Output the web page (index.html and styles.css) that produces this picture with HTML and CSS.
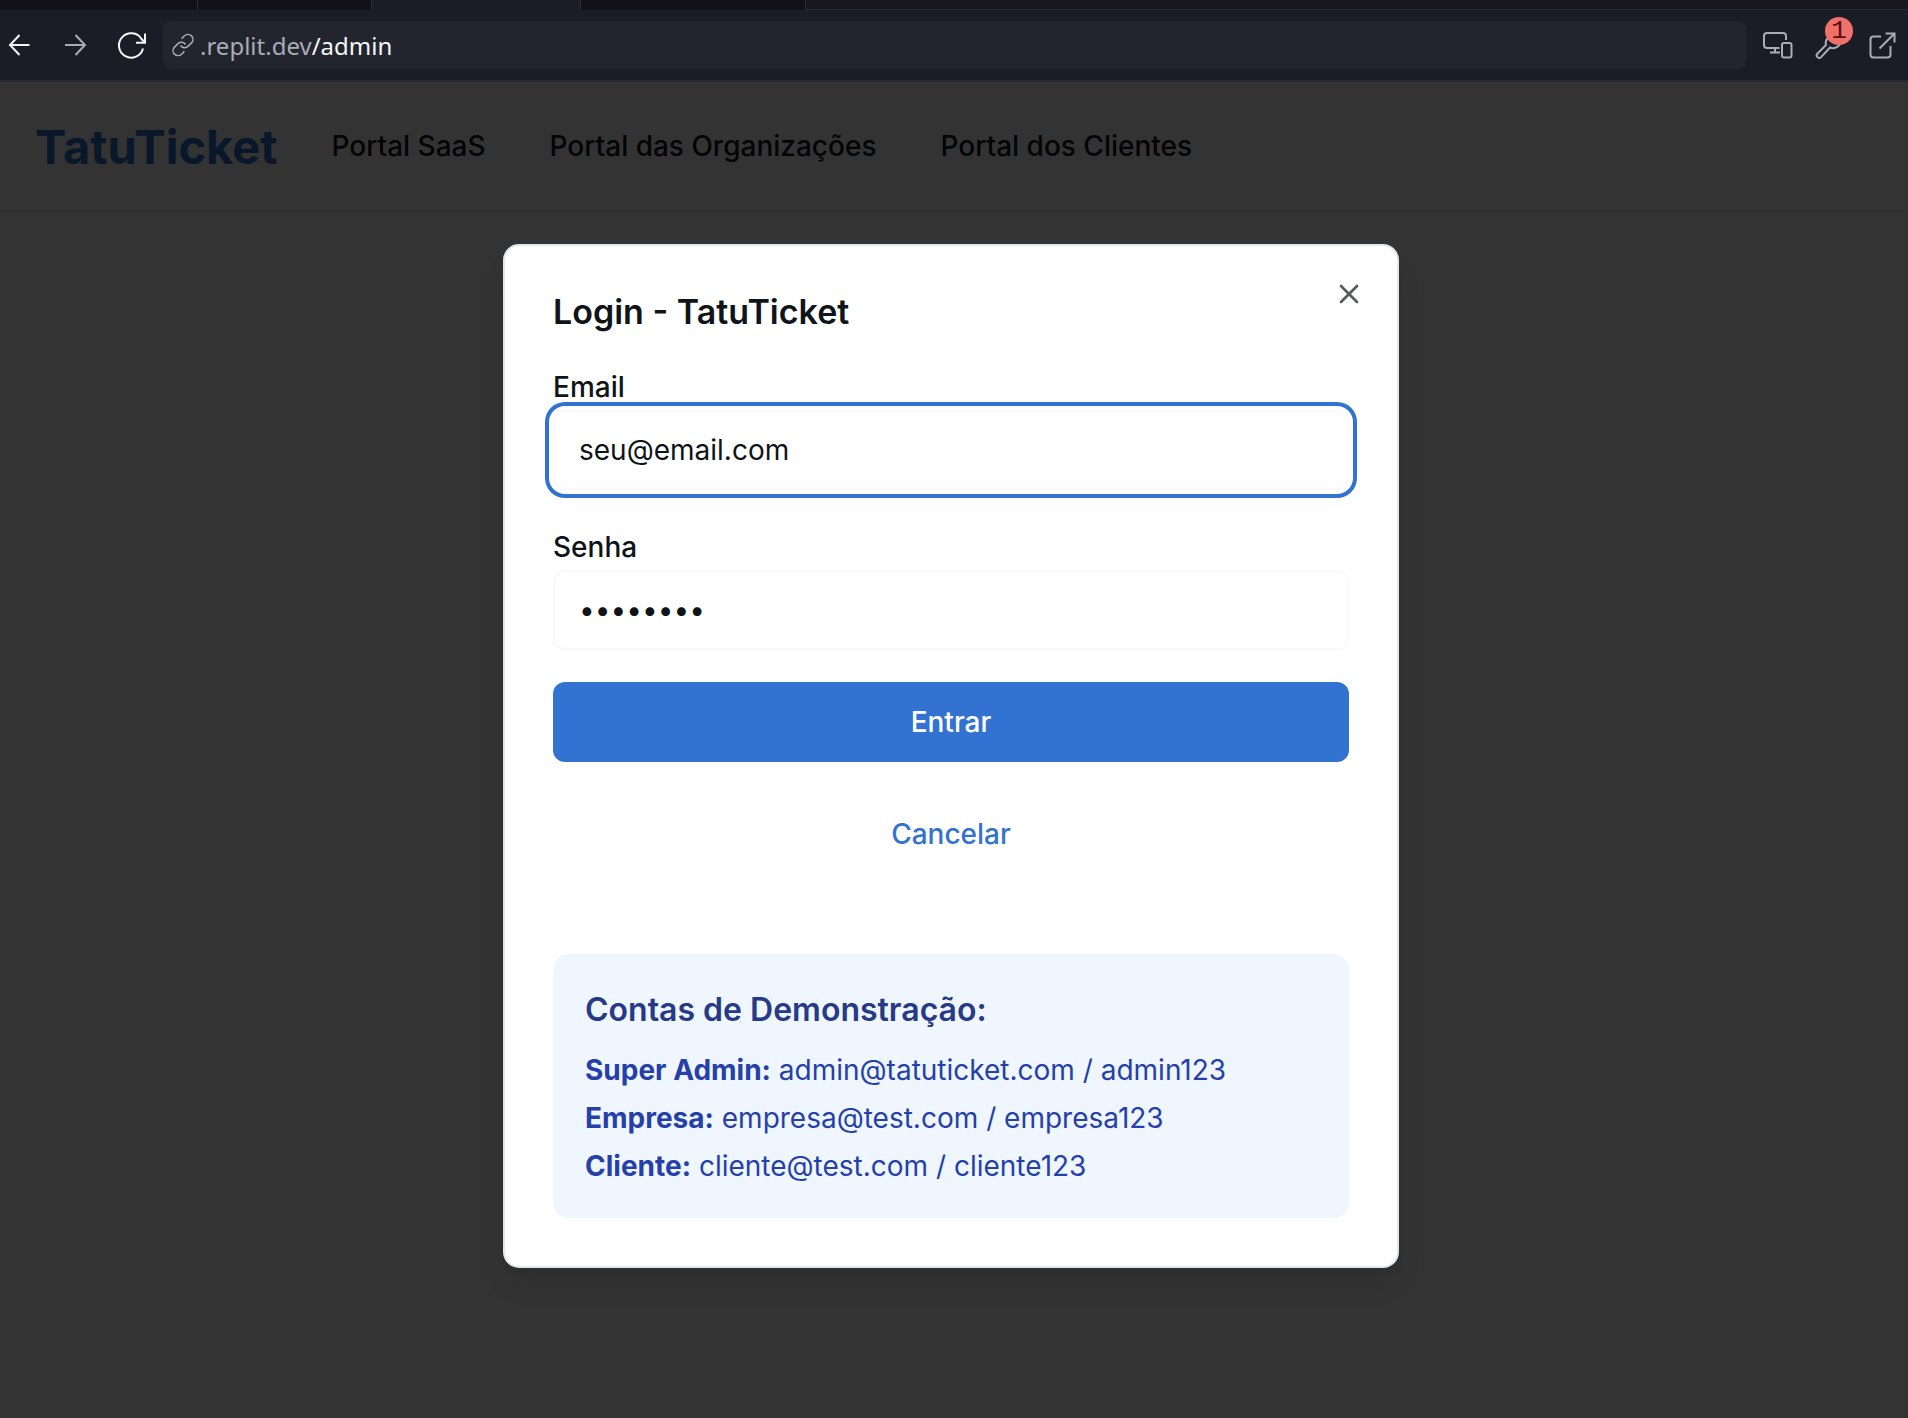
FILE: index.html
```html
<!DOCTYPE html>
<html lang="pt">
<head>
<meta charset="utf-8">
<title>TatuTicket</title>
<link rel="stylesheet" href="styles.css">
</head>
<body>
<div class="browser">
  <div class="tabs">
    <span class="tab tab-first"></span>
    <span class="tab tab-second"></span>
    <span class="tab tab-active"></span>
    <span class="tab tab-last"></span>
    <span class="tab-rest"></span>
  </div>
  <div class="toolbar">
    <button class="tool back" type="button" aria-label="Voltar"><svg width="32" height="32" viewBox="0 0 32 32"><path d="M27.500 16H8M17.500 6 8 16l9.500 10"/></svg></button>
    <button class="tool forward" type="button" aria-label="Avançar"><svg width="32" height="32" viewBox="0 0 32 32"><path d="M6 16h20M16.500 6 26 16l-9.500 10"/></svg></button>
    <button class="tool reload" type="button" aria-label="Recarregar"><svg width="32" height="32" viewBox="0 0 32 32"><path d="M28 19.500A12.200 12.200 0 1 1 26.500 10L29.500 13M30 4.500v9.200h-9"/></svg></button>
    <a class="address" href="/admin">
      <svg width="24" height="24" viewBox="0 0 24 24"><path d="M9.500 12.500a5 5 0 0 0 7.500.900l3.500-3.500a5 5 0 0 0-7.070-7.070l-2.800 2.800M14.500 11.500a5 5 0 0 0-7.500-.900l-3.500 3.500a5 5 0 0 0 7.070 7.070l2.800-2.800"/></svg>
      <span>.replit.dev<b>/admin</b></span>
    </a>
    <div class="tools-right">
      <button class="tool" type="button" aria-label="Dispositivos"><svg width="32" height="32" viewBox="0 0 32 32"><path d="M25 11V7a3 3 0 0 0-3-3H6a3 3 0 0 0-3 3v9a3 3 0 0 0 3 3h12.500M14 19v4.500M9 23.500h10"/><rect x="21" y="14" width="9.500" height="14.500" rx="2"/></svg></button>
      <button class="tool" type="button" aria-label="Ferramentas"><svg width="32" height="32" viewBox="0 0 32 32"><path d="M20 7a7 7 0 0 0-7 9L4.500 24.500a2.500 2.500 0 0 0 3.600 3.600L17 18.500a8 8 0 0 0 11-7"/></svg><span class="badge">1</span></button>
      <button class="tool" type="button" aria-label="Abrir em nova aba"><svg width="32" height="32" viewBox="0 0 32 32"><path d="M16 7.500H8.500a3 3 0 0 0-3 3v15a3 3 0 0 0 3 3h14a3 3 0 0 0 3-3V17M14.500 19.500 29.500 4.500M20.500 4.500h9v9"/></svg></button>
    </div>
  </div>
</div>

<div class="site">
  <header class="header">
    <a class="logo" href="/">TatuTicket</a>
    <nav class="nav">
      <a href="/saas">Portal SaaS</a>
      <a href="/organizacoes">Portal das Organizações</a>
      <a href="/clientes">Portal dos Clientes</a>
    </nav>
  </header>

  <div class="overlay">
    <section class="dialog" role="dialog" aria-labelledby="login-title">
      <h2 id="login-title">Login - TatuTicket</h2>
      <form class="form">
        <div class="field">
          <label for="email">Email</label>
          <input class="focused" id="email" type="email" placeholder="seu@email.com">
        </div>
        <div class="field">
          <label for="senha">Senha</label>
          <input id="senha" type="password" placeholder="••••••••">
        </div>
        <button class="btn primary" type="submit">Entrar</button>
        <button class="btn link" type="button">Cancelar</button>
      </form>
      <div class="demo">
        <h3>Contas de Demonstração:</h3>
        <p><strong>Super Admin:</strong> admin@tatuticket.com / admin123</p>
        <p><strong>Empresa:</strong> empresa@test.com / empresa123</p>
        <p><strong>Cliente:</strong> cliente@test.com / cliente123</p>
      </div>
      <button class="close" type="button" aria-label="Fechar"><svg width="32" height="32" viewBox="0 0 24 24"><path d="M18 6 6 18M6 6l12 12"/></svg></button>
    </section>
  </div>
</div>
</body>
</html>
```

FILE: styles.css
```css
* { box-sizing: border-box; margin: 0; }

body {
  display: flex;
  flex-direction: column;
  min-height: 100vh;
  background: #fff;
  color: #0f1419;
  font-family: Inter, "Liberation Sans", sans-serif;
  font-size: 28px;
}

a { color: inherit; text-decoration: none; }
button, input { font: inherit; color: inherit; }
button { padding: 0; border: 0; background: none; cursor: pointer; }
svg { display: block; fill: none; stroke: currentColor; }

/* Browser frame */
.browser { background: #1a1d25; border-bottom: 2px solid #262833; }
.tabs { display: flex; height: 10px; }
.tab { background: #11111a; border-right: 1px solid #2a2a35; }
.tab-first { width: 198px; }
.tab-second { width: 174px; }
.tab-active { width: 209px; background: #1a1d25; }
.tab-last { width: 225px; }
.tab-rest { flex: 1; background: #171720; border-bottom: 1px solid #2a2a35; }

.toolbar { display: flex; align-items: center; height: 70px; padding: 0 11px 0 2px; }
.tool { position: relative; flex: none; color: #a9abb6; }
.tool svg { stroke-width: 2; }
.back, .reload { color: #f5f5f7; }
.forward { margin-left: 25px; }
.reload { margin-left: 24px; margin-right: 16px; }
.address {
  display: flex;
  flex: 1;
  align-items: center;
  gap: 5px;
  height: 48px;
  padding: 0 8px;
  border-radius: 8px;
  background: #23252e;
  color: #a9abb6;
  font-family: "Noto Sans", sans-serif;
  font-size: 24px;
}
.address svg { stroke-width: 1.5; }
.address b { color: #f5f5f7; font-weight: 400; }
.tools-right { display: flex; gap: 20px; margin-left: 15px; }
.badge {
  position: absolute;
  top: -12px;
  right: -8px;
  width: 28px;
  height: 28px;
  border-radius: 14px;
  background: #f0706a;
  color: #5a0f0c;
  font-family: "Liberation Mono", monospace;
  font-size: 26px;
  line-height: 28px;
  text-align: center;
}

/* Page behind the dialog */
.site { position: relative; flex: 1; }
.header {
  display: flex;
  align-items: center;
  gap: 54px;
  height: 130px;
  padding: 0 35px;
  border-bottom: 2px solid #e1eaef;
}
.logo { color: #2f72d0; font-size: 47px; font-weight: 700; }
.nav { display: flex; gap: 64px; font-weight: 500; }

.overlay {
  position: absolute;
  inset: 0;
  display: flex;
  align-items: center;
  justify-content: center;
  padding: 12px 6px 0 0;
  background: rgba(0, 0, 0, 0.8);
}

/* Login dialog */
.dialog {
  position: relative;
  width: 896px;
  padding: 48px;
  border: 2px solid #e1e8ed;
  border-radius: 16px;
  background: #fff;
  box-shadow: 0 20px 30px -6px rgba(0, 0, 0, 0.1), 0 8px 12px -8px rgba(0, 0, 0, 0.1);
}
.dialog h2 { margin-bottom: 32px; font-size: 34px; font-weight: 600; line-height: 36px; }
.close { position: absolute; top: 32px; right: 32px; color: #57595c; }
.close svg { stroke-width: 2; stroke-linecap: round; }

.form { display: flex; flex-direction: column; gap: 32px; }
.field { display: flex; flex-direction: column; }
.field label { padding-top: 2px; font-weight: 500; line-height: 46px; }
.field input {
  height: 80px;
  padding: 0 24px;
  border: 2px solid #f8f9fa;
  border-radius: 12px;
  background: #fff;
  outline: none;
}
.field input::placeholder { color: #0f1419; opacity: 1; }
.field .focused { box-shadow: 0 0 0 4px #fff, 0 0 0 8px #3273d1; }

.btn { height: 80px; border-radius: 12px; font-weight: 500; }
.primary { background: #3273d1; color: #fff; }
.link { color: #3273d1; }

.demo {
  display: flex;
  flex-direction: column;
  gap: 8px;
  margin-top: 80px;
  padding: 32px;
  border-radius: 16px;
  background: #eff6fe;
  color: #253fab;
  line-height: 40px;
}
.demo h3 { margin-bottom: 8px; color: #263a87; font-size: 32px; font-weight: 600; line-height: 48px; }
```
